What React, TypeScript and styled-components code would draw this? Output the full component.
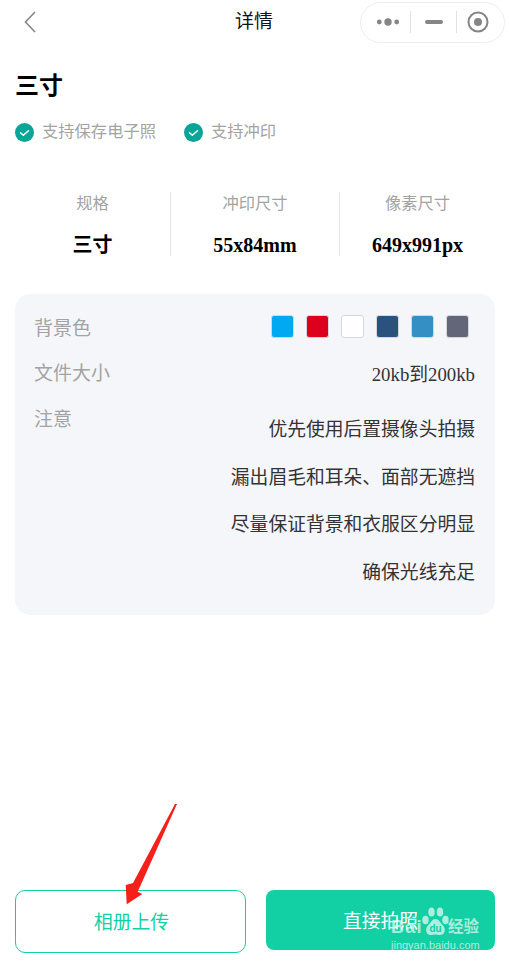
import React, { FunctionComponent } from 'react';
import styled, { createGlobalStyle } from 'styled-components';

const GlobalStyle = createGlobalStyle`
	html, body { margin: 0; padding: 0; background: #fff; }
	body { font-family: "Liberation Serif", "Noto Sans CJK SC", serif; }
	* { box-sizing: border-box; }
`;

const Page = styled.div`
	position: relative;
	display: flex;
	flex-direction: column;
	width: 509px;
	height: 962px;
	overflow: hidden;
	background: #fff;
`;

const NavBar = styled.div`
	display: grid;
	grid-template-columns: 211px auto 1fr;
	align-items: center;
	height: 43px;
	padding: 1px 4px 0 24px;
`;

const BackIcon = styled.svg`
	display: block;
	width: 12px;
	height: 22px;
`;

const NavTitle = styled.div`
	font-size: 19px;
	line-height: 24px;
	color: #111;
`;

const Capsule = styled.div`
	justify-self: end;
	display: flex;
	align-items: center;
	width: 145px;
	height: 41px;
	border: 1px solid #eeeeee;
	border-radius: 21px;
`;

const CapsuleCell = styled.div<{ $width: number; $left?: number; $right?: number }>`
	display: flex;
	align-items: center;
	justify-content: center;
	width: ${(p) => p.$width}px;
	height: 22px;
	padding-left: ${(p) => p.$left || 0}px;
	padding-right: ${(p) => p.$right || 0}px;
	& + & { border-left: 1px solid #e2e2e2; }
`;

const Heading = styled.h1`
	margin: 26px 0 0 15px;
	font-size: 24px;
	line-height: 34px;
	font-weight: 700;
	color: #000;
`;

const Tags = styled.div`
	display: flex;
	gap: 28px;
	margin: 17px 0 0 15px;
`;

const Tag = styled.div`
	display: flex;
	align-items: center;
	gap: 8px;
	font-size: 16.3px;
	line-height: 24px;
	color: #a3a3a3;
`;

const CheckIcon = styled.svg`
	display: block;
	width: 19px;
	height: 19px;
`;

const SpecRow = styled.div`
	display: grid;
	grid-template-columns: 155px 169px 156px;
	margin: 48px 0 0 15px;
	height: 64px;
`;

const SpecCell = styled.div`
	display: flex;
	flex-direction: column;
	align-items: center;
	justify-content: space-between;
	& + & { border-left: 1px solid #e6e6e6; }
`;

const SpecLabel = styled.div`
	margin-top: 1px;
	font-size: 16.3px;
	line-height: 22px;
	color: #a3a3a3;
`;

const SpecValue = styled.div`
	font-size: 20px;
	line-height: 26px;
	font-weight: 700;
	color: #000;
	margin-bottom: -2px;
`;

const Panel = styled.div`
	display: flex;
	flex-direction: column;
	margin: 38px 14px 0 15px;
	height: 321px;
	padding: 23px 20px 0;
	border-radius: 15px;
	background: #f5f6fa;
`;

const PanelRow = styled.div`
	display: flex;
	justify-content: space-between;
	align-items: flex-start;
	margin-bottom: 21px;
`;

const PanelLabel = styled.div`
	margin-left: -1px;
	font-size: 19px;
	line-height: 24px;
	color: #a3a3a3;
`;

const PanelValue = styled.div`
	font-size: 18.8px;
	line-height: 24px;
	color: #333;
`;

const FileSize = styled(PanelValue)`
	margin-top: 1px;
`;

const Swatches = styled.div`
	display: flex;
	gap: 12px;
	margin: -2px 6px 0 0;
`;

const Swatch = styled.div<{ $color: string }>`
	width: 23px;
	height: 23px;
	border: 1px solid #d6d6dc;
	border-radius: 3px;
	background: ${(p) => p.$color};
`;

const Notes = styled.div`
	display: flex;
	flex-direction: column;
	align-items: flex-end;
	gap: 23.6px;
	margin-top: 10px;
`;

const Footer = styled.div`
	display: flex;
	align-items: flex-start;
	gap: 20px;
	margin-top: auto;
	padding: 0 14px 9px 15px;
`;

const OutlineButton = styled.div`
	display: flex;
	align-items: center;
	justify-content: center;
	width: 231px;
	height: 63px;
	padding: 0 0 2px 2px;
	border: 1px solid #12d0a4;
	border-radius: 10px;
	font-size: 18.8px;
	color: #12d0a4;
`;

const FilledButton = styled.div`
	display: flex;
	align-items: center;
	justify-content: center;
	width: 229px;
	height: 60px;
	padding-bottom: 2px;
	border-radius: 8px;
	background: #12d0a4;
	font-size: 18.8px;
	color: #fff;
`;

const Arrow = styled.svg`
	position: absolute;
	left: 0;
	top: 0;
	width: 509px;
	height: 962px;
	pointer-events: none;
`;

const Watermark = styled.div`
	position: absolute;
	left: 391px;
	top: 907px;
	width: 118px;
	color: rgba(255, 255, 255, 0.65);
	font-family: "Liberation Sans", "Noto Sans CJK SC", sans-serif;
`;

const WatermarkLogo = styled.div`
	display: flex;
	align-items: flex-end;
	height: 29px;
`;

const WatermarkBai = styled.span`
	width: 31px;
	font-size: 18px;
	line-height: 18px;
	font-weight: 700;
	letter-spacing: 1.3px;
`;

const WatermarkPaw = styled.svg`
	display: block;
	width: 27px;
	height: 29px;
`;

const WatermarkCn = styled.span`
	margin-left: -1px;
	font-size: 15.5px;
	line-height: 19px;
	font-weight: 700;
`;

const WatermarkUrl = styled.div`
	margin-top: 2px;
	font-size: 11px;
	line-height: 14px;
`;

const swatches = ['#00a9f1', '#dc001e', '#ffffff', '#2b527f', '#3490c4', '#626678'];
const notes = ['优先使用后置摄像头拍摄', '漏出眉毛和耳朵、面部无遮挡', '尽量保证背景和衣服区分明显', '确保光线充足'];
const specs = [
	{ label: '规格', value: '三寸' },
	{ label: '冲印尺寸', value: '55x84mm' },
	{ label: '像素尺寸', value: '649x991px' },
];

const Check: FunctionComponent = () => (
	<CheckIcon viewBox="0 0 19 19">
		<circle cx="9.5" cy="9.5" r="9.5" fill="#0aa596" />
		<path d="M5.5 9.8l2.8 2.5 5.2-4.6" fill="none" stroke="#fff" strokeWidth="1.5" strokeLinecap="round" strokeLinejoin="round" />
	</CheckIcon>
);

const App: FunctionComponent = () => {
	return (
		<Page>
			<GlobalStyle />
			<NavBar>
				<BackIcon viewBox="0 0 12 22">
					<path d="M11 1L1.5 11 11 21" fill="none" stroke="#858585" strokeWidth="1.6" />
				</BackIcon>
				<NavTitle>详情</NavTitle>
				<Capsule>
					<CapsuleCell $width={49} $left={4}>
						<svg width="26" height="10" viewBox="0 0 26 10">
							<circle cx="4.300" cy="5" r="2.400" fill="#858585" />
							<circle cx="13" cy="5" r="3.700" fill="#858585" />
							<circle cx="21.700" cy="5" r="2.400" fill="#858585" />
						</svg>
					</CapsuleCell>
					<CapsuleCell $width={46}>
						<svg width="20" height="6" viewBox="0 0 20 6">
							<rect x="1" y="1" width="18" height="4" rx="2" fill="#858585" />
						</svg>
					</CapsuleCell>
					<CapsuleCell $width={48} $right={5}>
						<svg width="24" height="24" viewBox="0 0 24 24">
							<circle cx="12" cy="12" r="9.500" fill="none" stroke="#858585" strokeWidth="2" />
							<circle cx="12" cy="12" r="4" fill="#858585" />
						</svg>
					</CapsuleCell>
				</Capsule>
			</NavBar>

			<Heading>三寸</Heading>
			<Tags>
				<Tag><Check />支持保存电子照</Tag>
				<Tag><Check />支持冲印</Tag>
			</Tags>

			<SpecRow>
				{specs.map((spec) => (
					<SpecCell key={spec.label}>
						<SpecLabel>{spec.label}</SpecLabel>
						<SpecValue>{spec.value}</SpecValue>
					</SpecCell>
				))}
			</SpecRow>

			<Panel>
				<PanelRow>
					<PanelLabel>背景色</PanelLabel>
					<Swatches>
						{swatches.map((color) => (
							<Swatch key={color} $color={color} />
						))}
					</Swatches>
				</PanelRow>
				<PanelRow>
					<PanelLabel>文件大小</PanelLabel>
					<FileSize>20kb到200kb</FileSize>
				</PanelRow>
				<PanelRow>
					<PanelLabel>注意</PanelLabel>
					<Notes>
						{notes.map((note) => (
							<PanelValue key={note}>{note}</PanelValue>
						))}
					</Notes>
				</PanelRow>
			</Panel>

			<Footer>
				<OutlineButton>相册上传</OutlineButton>
				<FilledButton>直接拍照</FilledButton>
			</Footer>

			<Arrow viewBox="0 0 509 962">
				<polygon points="177,804 175,804 133,883 125.700,885 126.700,904.300 142.300,894 137.700,891.700" fill="#f5201a" />
			</Arrow>

			<Watermark>
				<WatermarkLogo>
					<WatermarkBai>Bai</WatermarkBai>
					<WatermarkPaw viewBox="0 0 27 29">
						<ellipse cx="3.500" cy="13" rx="3.200" ry="4.200" fill="currentColor" />
						<ellipse cx="9.500" cy="5" rx="3.200" ry="4.600" fill="currentColor" />
						<ellipse cx="18" cy="5" rx="3.200" ry="4.600" fill="currentColor" />
						<ellipse cx="23.500" cy="13" rx="3.200" ry="4.200" fill="currentColor" />
						<path d="M13.500 12c-3.500 0-4.500 3.500-7.500 6.500-3 3-2.500 9.500 3 9.500 2 0 3-.6 4.500-.6s2.500.6 4.500.6c5.500 0 6-6.500 3-9.500-3-3-4-6.500-7.500-6.500z" fill="currentColor" />
						<text x="13.500" y="25" textAnchor="middle" fontSize="10" fontWeight="700" fill="#12d0a4">du</text>
					</WatermarkPaw>
					<WatermarkCn>经验</WatermarkCn>
				</WatermarkLogo>
				<WatermarkUrl>jingyan.baidu.com</WatermarkUrl>
			</Watermark>
		</Page>
	);
};

export default App;
